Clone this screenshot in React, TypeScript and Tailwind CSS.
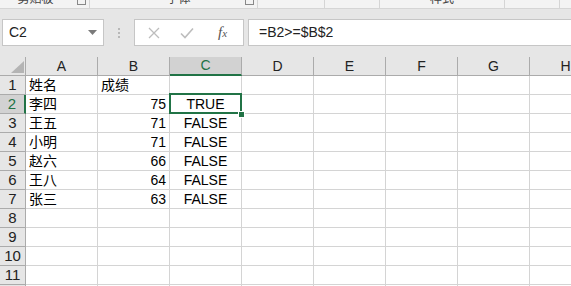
import React from 'react';

const rows: [string, string, string][] = [
  ['姓名', '成绩', ''],
  ['李四', '75', 'TRUE'],
  ['王五', '71', 'FALSE'],
  ['小明', '71', 'FALSE'],
  ['赵六', '66', 'FALSE'],
  ['王八', '64', 'FALSE'],
  ['张三', '63', 'FALSE'],
  ['', '', ''],
  ['', '', ''],
  ['', '', ''],
  ['', '', ''],
  ['', '', ''],
];

const cols = ['A', 'B', 'C', 'D', 'E', 'F', 'G', 'H'];

const ribbonGroups = [
  { w: 'w-[90px] pr-[18px]', label: '剪贴板', launcher: true },
  { w: 'w-[168px] pl-[10px]', label: '字体', launcher: true },
  { w: 'w-[67px]', label: '', launcher: false },
  { w: 'w-[55px]', label: '', launcher: false },
  { w: 'w-[125px]', label: '样式', launcher: false },
  { w: 'w-[55px]', label: '', launcher: false },
];

const font = { fontFamily: '"Liberation Sans", "Noto Sans CJK SC", sans-serif' };

const isNumber = (v: string) => v !== '' && !isNaN(Number(v));

const App: React.FC = () => {
  return (
    <div className="w-[571px] h-[286px] overflow-hidden bg-[#e6e6e6] text-black" style={font}>
      {/* ribbon bottom (clipped) */}
      <div className="h-[9px] bg-[#f3f3f3] border-b border-[#d5d5d5] flex overflow-hidden">
        {ribbonGroups.map((g, i) => (
          <div key={i} className={`${g.w} shrink-0 h-[8px] border-r border-[#d5d5d5] flex items-start justify-center relative`}>
            <span className="text-[12px] leading-[12px] -mt-[7px] text-[#444]">{g.label}</span>
            {g.launcher && (
              <span className="absolute right-[3px] -top-[4px] w-[9px] h-[9px] border border-[#888]" />
            )}
          </div>
        ))}
      </div>

      {/* formula bar */}
      <div className="flex items-center pt-[10px] pb-[11px] pl-[2px]">
        <div className="w-[102px] h-[27px] shrink-0 bg-white border border-[#c6c6c6] flex items-center justify-between pl-[6px] pr-[6px]">
          <span className="text-[14px] text-[#222]">C2</span>
          <svg width="9" height="5" viewBox="0 0 9 5"><path d="M0 0h9L4.5 5z" fill="#7a7a7a" /></svg>
        </div>
        <div className="w-[30px] shrink-0 flex flex-col items-center gap-[2px]">
          <span className="w-[2px] h-[2px] bg-[#b8b8b8]" />
          <span className="w-[2px] h-[2px] bg-[#b8b8b8]" />
          <span className="w-[2px] h-[2px] bg-[#b8b8b8]" />
        </div>
        <div className="w-[110px] h-[27px] shrink-0 bg-white border border-[#c6c6c6] flex items-center">
          <svg className="ml-[13px]" width="12" height="12" viewBox="0 0 12 12">
            <path d="M1 1l10 10M11 1L1 11" stroke="#bdbdbd" strokeWidth="1.3" />
          </svg>
          <svg className="ml-[20px]" width="14" height="12" viewBox="0 0 14 12">
            <path d="M1 6.5l4 4L13 1.5" stroke="#bdbdbd" strokeWidth="1.6" fill="none" />
          </svg>
          <span className="ml-[24px] text-[15px] leading-none italic text-[#555]" style={{ fontFamily: '"Liberation Serif", serif' }}>
            f<span className="text-[11px]">x</span>
          </span>
        </div>
        <div className="ml-[4px] w-[330px] h-[27px] shrink-0 bg-white border border-[#c6c6c6] flex items-center pl-[10px]">
          <span className="text-[14px] text-[#222]">=B2&gt;=$B$2</span>
        </div>
      </div>

      {/* grid */}
      <div className="relative bg-white">
        <div className="flex h-[19px] bg-[#e6e6e6]">
          <div className="w-[26px] shrink-0 border-r border-b border-[#ababab] flex items-end justify-end pr-[1px] pb-[2px]">
            <svg width="13" height="12" viewBox="0 0 13 12"><path d="M13 0V12H0z" fill="#b4b4b4" /></svg>
          </div>
          {cols.map((c) =>
            c === 'C' ? (
              <div key={c} className="w-[72px] shrink-0 bg-[#d2d2d2] border-r border-[#ababab] border-b-2 border-b-[#217346] flex items-center justify-center text-[14px] text-[#217346]">
                {c}
              </div>
            ) : (
              <div key={c} className="w-[72px] shrink-0 border-r border-b border-[#ababab] flex items-center justify-center text-[14px] text-[#222]">
                {c}
              </div>
            )
          )}
        </div>
        {rows.map((r, i) => (
          <div key={i} className="flex h-[19px]">
            {i === 1 ? (
              <div className="w-[26px] shrink-0 bg-[#d2d2d2] border-r-2 border-r-[#217346] border-b border-[#ababab] flex items-center justify-center text-[15px] text-[#217346]">
                {i + 1}
              </div>
            ) : (
              <div className="w-[26px] shrink-0 bg-[#e6e6e6] border-r border-b border-[#ababab] flex items-center justify-center text-[15px] text-[#222]">
                {i + 1}
              </div>
            )}
            <div className="w-[72px] shrink-0 border-r border-b border-[#d4d4d4] flex items-center pl-[3px] text-[14px]">{r[0]}</div>
            <div
              className={`w-[72px] shrink-0 border-r border-b border-[#d4d4d4] flex items-center text-[14px] ${
                isNumber(r[1]) ? 'justify-end pr-[3px]' : 'pl-[3px]'
              }`}
            >
              {r[1]}
            </div>
            <div className="w-[72px] shrink-0 border-r border-b border-[#d4d4d4] flex items-center justify-center text-[14px]">{r[2]}</div>
            {cols.slice(3).map((c) => (
              <div key={c} className="w-[72px] shrink-0 border-r border-b border-[#d4d4d4]" />
            ))}
          </div>
        ))}
        {/* active cell */}
        <div className="absolute left-[169px] top-[36px] w-[73px] h-[21px] border-2 border-[#217346]" />
        <div className="absolute left-[238px] top-[54px] w-[7px] h-[7px] bg-[#217346] border border-white" />
      </div>
    </div>
  );
};

export default App;
